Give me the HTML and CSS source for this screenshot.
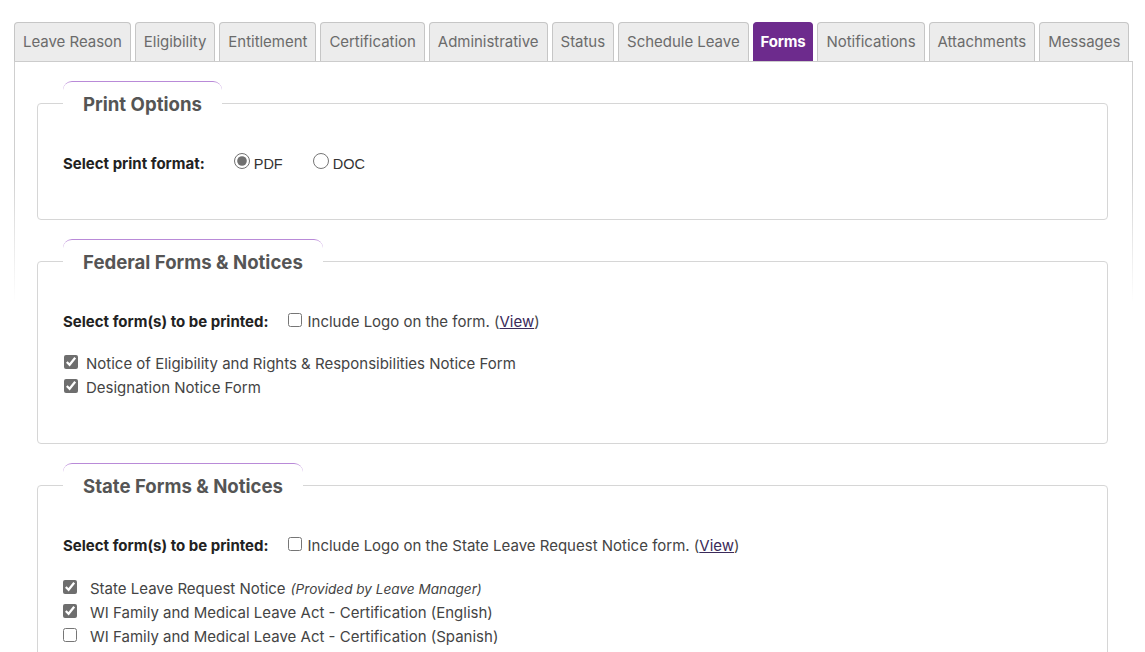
FILE: index.html
```html
<!DOCTYPE html>
<html>
<head>
<meta charset="utf-8">
<link rel="stylesheet" href="styles.css">
</head>
<body>
<div class="page">
  <div class="tabs">
    <div class="tab">Leave Reason</div>
    <div class="tab">Eligibility</div>
    <div class="tab">Entitlement</div>
    <div class="tab">Certification</div>
    <div class="tab">Administrative</div>
    <div class="tab">Status</div>
    <div class="tab">Schedule Leave</div>
    <div class="tab active">Forms</div>
    <div class="tab">Notifications</div>
    <div class="tab">Attachments</div>
    <div class="tab">Messages</div>
  </div>
  <div class="panel">
    <fieldset class="box">
      <legend class="legend">Print Options</legend>
      <div class="row">
        <span class="label">Select print format:</span>
        <label class="radio"><input type="radio" name="fmt" checked> PDF</label>
        <label class="radio"><input type="radio" name="fmt"> DOC</label>
      </div>
    </fieldset>

    <fieldset class="box">
      <legend class="legend">Federal Forms &amp; Notices</legend>
      <div class="row">
        <span class="label">Select form(s) to be printed:</span>
        <label class="logo"><input type="checkbox"> Include Logo on the form. (<a href="#">View</a>)</label>
      </div>
      <div class="items">
        <label class="item"><input type="checkbox" checked>Notice of Eligibility and Rights &amp; Responsibilities Notice Form</label>
        <label class="item"><input type="checkbox" checked>Designation Notice Form</label>
      </div>
    </fieldset>

    <fieldset class="box">
      <legend class="legend">State Forms &amp; Notices</legend>
      <div class="row">
        <span class="label">Select form(s) to be printed:</span>
        <label class="logo"><input type="checkbox"> Include Logo on the State Leave Request Notice form. (<a href="#">View</a>)</label>
      </div>
      <div class="items state">
        <label class="item"><input type="checkbox" checked>State Leave Request Notice <em class="note">(Provided by Leave Manager)</em></label>
        <label class="item"><input type="checkbox" checked>WI Family and Medical Leave Act - Certification (English)</label>
        <label class="item"><input type="checkbox">WI Family and Medical Leave Act - Certification (Spanish)</label>
        <label class="item"><input type="checkbox">WI Family and Medical Leave Act - Notice</label>
      </div>
    </fieldset>
  </div>
</div>
</body>
</html>
```

FILE: styles.css
```css
html, body {
  margin: 0;
  padding: 0;
  background: #fff;
  overflow: hidden;
}
body {
  font-family: Inter, "Noto Sans", sans-serif;
  color: #444;
  font-size: 15px;
}
.page {
  padding: 22px 13px 0 14px;
}
.tabs {
  display: flex;
  gap: 4px;
  align-items: flex-end;
}
.tab {
  height: 38px;
  line-height: 38px;
  padding: 0 8px;
  border: 1px solid #c6c6c6;
  border-bottom: none;
  border-radius: 4px 4px 0 0;
  background: #ececec;
  color: #6b6b6b;
  font-size: 15px;
  letter-spacing: -0.03px;
  white-space: nowrap;
}
.tab.active {
  background: #6d2b8d;
  border-color: #6d2b8d;
  color: #fff;
  font-weight: 700;
  padding: 0 7px;
  letter-spacing: -0.2px;
}
.panel {
  border-top: 1px solid #cccccc;
  padding: 0 0 40px 23px;
  background-image:
    linear-gradient(to bottom, #cfcfcf 0%, #cfcfcf 45%, rgba(207,207,207,0) 100%),
    linear-gradient(to bottom, #cfcfcf 0%, #cfcfcf 45%, rgba(207,207,207,0) 100%);
  background-size: 1px 240px, 1px 240px;
  background-position: left top, right top;
  background-repeat: no-repeat;
  box-sizing: border-box;
  width: 1119px;
}
.box {
  width: 1071px;
  box-sizing: border-box;
  margin: 19px 0 0 0;
  padding: 0 25px 45px 25px;
  border: 1px solid #d6d6d6;
  border-radius: 4px;
}
.legend {
  padding: 11px 20px;
  border-top: 1px solid #b98ad8;
  border-radius: 9px 9px 0 0;
  font-size: 18.6px;
  line-height: 22px;
  font-weight: 700;
  color: #555;
}
.row {
  display: flex;
  align-items: center;
  margin-top: 28px;
  height: 20px;
  line-height: 20px;
}
.label {
  font-family: Inter, "Noto Sans", sans-serif;
  font-weight: 700;
  font-size: 15px;
  color: #222;
}
.radio {
  display: inline-flex;
  align-items: center;
  font-family: "Liberation Sans", Arial, sans-serif;
  font-size: 14.5px;
  color: #333;
  margin-left: 29px;
}
.radio + .radio {
  margin-left: 30px;
}
.radio input {
  margin: 0 4px 6px 0;
  width: 16px;
  height: 16px;
  accent-color: #707070;
}
.logo {
  display: inline-flex;
  align-items: center;
  margin-left: 19px;
  color: #444;
}
.logo input {
  margin: 0 6px 4px 0;
  width: 14px;
  height: 14px;
}
.logo a {
  color: #3b2a5a;
  text-decoration: underline;
}
.items {
  margin-top: 20px;
  margin-bottom: -2px;
  display: flex;
  flex-direction: column;
}
.item {
  display: flex;
  align-items: center;
  height: 24px;
  line-height: 24px;
}
.item input {
  margin: 0 8px 4px 1px;
  width: 14px;
  height: 14px;
  accent-color: #6e6e6e;
}
.items.state {
  margin-top: 21px;
}
.items.state .item input {
  margin: 0 13px 4px 0;
}
.note {
  font-size: 13.6px;
  margin-left: 5px;
  color: #444;
}
```
